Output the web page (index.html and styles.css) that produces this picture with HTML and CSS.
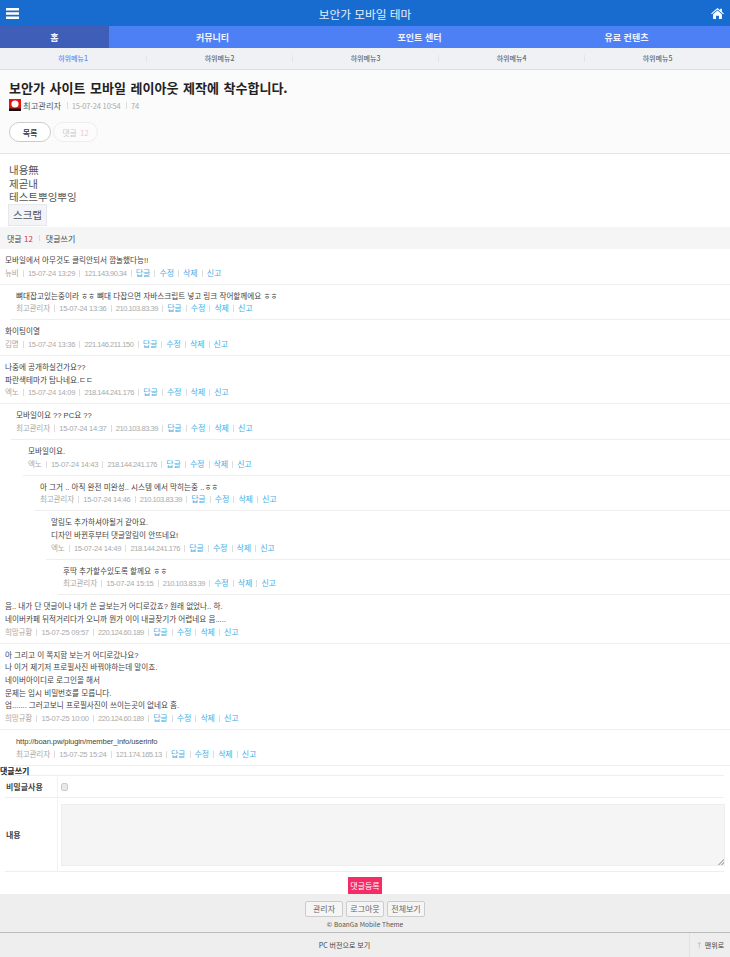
FILE: index.html
```html
<!DOCTYPE html>
<html lang="ko">
<head>
    <meta charset="UTF-8">
    <meta name="viewport" content="width=device-width, initial-scale=1.0">
    <title>보안가 모바일 테마</title>
    <link rel="stylesheet" href="styles.css">
</head>
<body>
    <div class="header">
        <svg class="icon-bars" viewBox="0 0 13 11"><path d="M0 0h13v2.4H0zM0 4.3h13v2.4H0zM0 8.6h13V11H0z"/></svg>
        <h1>보안가 모바일 테마</h1>
        <svg class="icon-home" viewBox="0 0 14 12"><path d="M7 0 0 6l.8.9L7 1.6l6.2 5.3.8-.9-2.2-1.9V.8h-1.9v1.7z"/><path d="M7 2.7 2.2 6.8V12h3.2V8.5h3.2V12h3.2V6.8z"/></svg>
    </div>

    <div class="nav">
        <a class="on">홈</a>
        <a>커뮤니티</a>
        <a>포인트 센터</a>
        <a>유료 컨텐츠</a>
    </div>

    <div class="subnav">
        <a class="on">하위메뉴1</a>
        <a>하위메뉴2</a>
        <a>하위메뉴3</a>
        <a>하위메뉴4</a>
        <a>하위메뉴5</a>
    </div>

    <div class="post-head">
        <h2>보안가 사이트 모바일 레이아웃 제작에 착수합니다.</h2>
        <div class="post-meta">
            <svg class="avatar" viewBox="0 0 12 12"><rect width="12" height="12" fill="#e8120c"/><circle cx="6" cy="5" r="3.6" fill="#fff"/><rect y="9.5" width="12" height="2.5" fill="#111"/></svg>
            <span class="post-author">최고관리자</span>
            <span class="post-sep">15-07-24 10:54</span>
            <span class="post-sep">74</span>
        </div>
        <div class="post-btns">
            <a class="pill">목록</a>
            <a class="pill pill-off">댓글 <em>12</em></a>
        </div>
    </div>

    <div class="post-body">
        <p>내용無</p>
        <p>제곧내</p>
        <p>테스트뿌잉뿌잉</p>
        <a class="scrap">스크랩</a>
    </div>

    <div class="cmt-bar">
        <span>댓글 <em>12</em></span>
        <i></i>
        <span>댓글쓰기</span>
    </div>

    <div class="cmt">
        <p>모바일에서 아무것도 클릭안되서 깜놀했다능!!</p>
        <div class="cmt-meta"><span>뉴비</span><span>15-07-24 13:29</span><span>121.143.90.34</span><a>답글</a><a>수정</a><a>삭제</a><a>신고</a></div>
    </div>
    <div class="cmt lv1">
        <p>뼈대잡고있는중이라 ㅎㅎ 뼈대 다잡으면 자바스크립트 넣고 링크 작어할께에요 ㅎㅎ</p>
        <div class="cmt-meta"><span>최고관리자</span><span>15-07-24 13:36</span><span>210.103.83.39</span><a>답글</a><a>수정</a><a>삭제</a><a>신고</a></div>
    </div>
    <div class="cmt">
        <p>화이팅이열</p>
        <div class="cmt-meta"><span>김명</span><span>15-07-24 13:36</span><span>221.146.211.150</span><a>답글</a><a>수정</a><a>삭제</a><a>신고</a></div>
    </div>
    <div class="cmt">
        <p>나중에 공개하실건가요??</p>
        <p>파란색테마가 탐나네요.ㄷㄷ</p>
        <div class="cmt-meta"><span>엑노</span><span>15-07-24 14:09</span><span>218.144.241.176</span><a>답글</a><a>수정</a><a>삭제</a><a>신고</a></div>
    </div>
    <div class="cmt lv1">
        <p>모바일이요 ?? PC요 ??</p>
        <div class="cmt-meta"><span>최고관리자</span><span>15-07-24 14:37</span><span>210.103.83.39</span><a>답글</a><a>수정</a><a>삭제</a><a>신고</a></div>
    </div>
    <div class="cmt lv2">
        <p>모바일이요.</p>
        <div class="cmt-meta"><span>엑노</span><span>15-07-24 14:43</span><span>218.144.241.176</span><a>답글</a><a>수정</a><a>삭제</a><a>신고</a></div>
    </div>
    <div class="cmt lv3">
        <p>아 그거 .. 아직 완전 미완성.. 시스템 에서 막히는중 ..ㅎㅎ</p>
        <div class="cmt-meta"><span>최고관리자</span><span>15-07-24 14:46</span><span>210.103.83.39</span><a>답글</a><a>수정</a><a>삭제</a><a>신고</a></div>
    </div>
    <div class="cmt lv4">
        <p>알림도 추가하셔야될거 같아요.</p>
        <p>디자인 바뀐후부터 댓글알림이 안뜨네요!</p>
        <div class="cmt-meta"><span>엑노</span><span>15-07-24 14:49</span><span>218.144.241.176</span><a>답글</a><a>수정</a><a>삭제</a><a>신고</a></div>
    </div>
    <div class="cmt lv5">
        <p>후딱 추가할수있도록 할께요 ㅎㅎ</p>
        <div class="cmt-meta"><span>최고관리자</span><span>15-07-24 15:15</span><span>210.103.83.39</span><a>수정</a><a>삭제</a><a>신고</a></div>
    </div>
    <div class="cmt">
        <p>음.. 내가 단 댓글이나 내가 쓴 글보는거 어디로갔죠? 원래 없었나.. 하.</p>
        <p>네이버카페 뒤적거리다가 오니까 뭔가 이이 내글찾기가 어렵네요 음.....</p>
        <div class="cmt-meta"><span>희망규황</span><span>15-07-25 09:57</span><span>220.124.60.189</span><a>답글</a><a>수정</a><a>삭제</a><a>신고</a></div>
    </div>
    <div class="cmt">
        <p>아 그리고 이 쪽지함 보는거 어디로갔나요?</p>
        <p>나 이거 제기저 프로필사진 바꿔야하는데 말이죠.</p>
        <p>네이버아이디로 로그인을 해서</p>
        <p>문제는 임시 비밀번호를 모릅니다.</p>
        <p>엄....... 그러고보니 프로필사진이 쓰이는곳이 없네요 흠.</p>
        <div class="cmt-meta"><span>희망규황</span><span>15-07-25 10:00</span><span>220.124.60.189</span><a>답글</a><a>수정</a><a>삭제</a><a>신고</a></div>
    </div>
    <div class="cmt lv1">
        <p class="cmt-url">http://boan.pw/plugin/member_info/userinfo</p>
        <div class="cmt-meta"><span>최고관리자</span><span>15-07-25 15:24</span><span>121.174.165.13</span><a>답글</a><a>수정</a><a>삭제</a><a>신고</a></div>
    </div>

    <div class="write">
        <h3>댓글쓰기</h3>
        <div class="write-row write-secret">
            <label>비밀글사용</label>
            <div><input type="checkbox"></div>
        </div>
        <div class="write-row write-content">
            <label>내용</label>
            <div><textarea></textarea></div>
        </div>
        <div class="write-submit"><button>댓글등록</button></div>
    </div>

    <div class="footer">
        <div class="footer-btns">
            <a>관리자</a>
            <a>로그아웃</a>
            <a>전체보기</a>
        </div>
        <p>© BoanGa Mobile Theme</p>
    </div>

    <div class="bottom">
        <a class="bottom-pc">PC 버전으로 보기</a>
        <a class="bottom-top"><small>↑</small> 맨위로</a>
    </div>
</body>
</html>
```

FILE: styles.css
```css
* {
    box-sizing: border-box;
}

body {
    margin: 0;
    font-family: "Noto Sans CJK KR", "Noto Sans", sans-serif;
    font-size: 9px;
    color: #333;
    background: #fff;
}

p, h1, h2, h3 {
    margin: 0;
    font-weight: normal;
}

em {
    font-style: normal;
}

.header {
    height: 26px;
    background: #196ccf;
    display: flex;
    align-items: center;
    justify-content: space-between;
    padding: 0 6px;
}
.header h1 {
    font-size: 11.7px;
    color: #e6eefa;
}
.icon-bars {
    width: 13px;
    height: 11px;
    fill: #fff;
}
.icon-home {
    width: 13px;
    height: 11px;
    fill: #fff;
}

.nav {
    height: 22px;
    background: #4e80f5;
    display: grid;
    grid-template-columns: 109px 1fr 1fr 1fr;
}
.nav a {
    display: flex;
    align-items: center;
    justify-content: center;
    color: #eef3ff;
    font-size: 9px;
    font-weight: 700;
}
.nav a.on {
    background: #3f5eb8;
}

.subnav {
    height: 22px;
    background: #eff1f5;
    border-bottom: 1px solid #ddd;
    display: grid;
    grid-template-columns: repeat(5, 1fr);
    align-items: center;
}
.subnav a {
    text-align: center;
    font-size: 7px;
    font-weight: 500;
    color: #666;
    line-height: 7px;
    border-left: 1px solid #e2e4e8;
}
.subnav a:first-child {
    border-left: 0;
}
.subnav a.on {
    color: #5a8af5;
}

.post-head {
    height: 84px;
    background: #fbfbfb;
    border-bottom: 1px solid #e5e5e5;
    padding: 9px 9px 0;
}
.post-head h2 {
    font-size: 13px;
    font-weight: 700;
    line-height: 17px;
    word-spacing: 1px;
    color: #222;
}
.post-meta {
    display: flex;
    align-items: center;
    height: 12px;
    margin-top: 3px;
    font-size: 7.5px;
    letter-spacing: -0.15px;
    color: #aaa;
}
.avatar {
    width: 12px;
    height: 12px;
    margin-right: 2px;
}
.post-author {
    color: #555;
    font-size: 8.3px;
    letter-spacing: 0;
}
.post-sep {
    margin-left: 5.5px;
    padding-left: 4px;
    border-left: 1px solid #ddd;
    line-height: 7px;
}
.post-btns {
    display: flex;
    gap: 2px;
    margin-top: 11px;
}
.pill {
    display: flex;
    align-items: center;
    justify-content: center;
    width: 42px;
    height: 20px;
    border: 1px solid #ccc;
    border-radius: 10px;
    background: #fff;
    font-size: 8px;
    font-weight: 500;
}
.pill-off {
    width: 45px;
    border-color: #eee;
    background: #fcfcfc;
    color: #c8c8c8;
    font-weight: normal;
}
.pill-off em {
    color: #f5c8c8;
    margin-left: 3px;
}

.post-body {
    height: 73px;
    padding: 9px 9px 0;
    font-size: 10.5px;
    line-height: 13.5px;
    color: #555;
}
.scrap {
    display: flex;
    align-items: center;
    justify-content: center;
    width: 39px;
    height: 22px;
    margin-left: -1px;
    background: #f2f4f8;
    border: 1px solid #e6e8ec;
    font-size: 10.5px;
}

.cmt-bar {
    height: 22px;
    background: #f5f5f5;
    display: flex;
    align-items: center;
    padding: 0 7px;
    font-size: 8px;
    color: #444;
}
.cmt-bar em {
    color: #d33;
}
.cmt-bar i {
    width: 1px;
    height: 6px;
    background: #ddd;
    margin: 0 6px;
}

.cmt {
    padding: 6px 0 3.33px 5px;
    border-bottom: 1px solid #eee;
    font-family: "Liberation Sans", "Noto Sans CJK KR", sans-serif;
    font-size: 7.6px;
    line-height: 12.67px;
    color: #444;
}
.lv1 { margin-left: 11px; }
.lv2 { margin-left: 23px; }
.lv3 { margin-left: 35px; }
.lv4 { margin-left: 46px; }
.lv5 { margin-left: 58px; }
.cmt-url {
    letter-spacing: -0.1px;
}
.cmt-meta {
    display: flex;
    height: 12.67px;
    color: #aaa;
    letter-spacing: -0.2px;
}
.cmt-meta span + span, .cmt-meta a {
    margin-left: 4.3px;
}
.cmt-meta span:nth-child(2) {
    letter-spacing: -0.3px;
}
.cmt-meta span:nth-child(3) {
    letter-spacing: -0.5px;
}
.cmt-meta span + span::before, .cmt-meta a::before {
    content: "";
    display: inline-block;
    width: 1px;
    height: 7px;
    margin-right: 4px;
    vertical-align: -1px;
    background: #ddd;
}
.cmt-meta a {
    color: #45aee6;
    font-size: 8px;
}

.write h3 {
    font-size: 8px;
    font-weight: 700;
    line-height: 9px;
    color: #222;
}
.write-row {
    margin: 0 6px 0 5px;
    display: grid;
    grid-template-columns: 53px 1fr;
    border-top: 1px solid #eee;
}
.write-row label {
    display: flex;
    align-items: center;
    padding-left: 1px;
    font-size: 8px;
    font-weight: 700;
    color: #444;
    border-right: 1px solid #f2f2f2;
}
.write-secret {
    height: 22px;
}
.write-secret input {
    appearance: none;
    display: block;
    width: 7px;
    height: 8px;
    margin: 7px 0 0 3px;
    background: #e8e8e8;
    border: 1px solid #ccc;
    border-radius: 2px;
}
.write-content {
    height: 75px;
    border-bottom: 1px solid #eee;
}
.write-content div {
    padding: 6px 0 0 3px;
}
.write-content textarea {
    display: block;
    width: calc(100% + 1px);
    height: 62px;
    background: #f5f5f5;
    border: 1px solid #eee;
}
.write-content textarea::-webkit-resizer {
    background: linear-gradient(135deg, transparent 50%, #bbb 50%, #bbb 60%, transparent 60%, transparent 75%, #bbb 75%, #bbb 85%, transparent 85%) right bottom / 6px 6px no-repeat;
}
.write-submit {
    display: flex;
    justify-content: center;
    padding: 5px 0 0;
}
.write-submit button {
    width: 34px;
    height: 17px;
    border: 0;
    padding: 0;
    background: #f72b66;
    color: #fff;
    font-family: inherit;
    font-size: 8px;
}

.footer {
    height: 39px;
    background: #eee;
    border-bottom: 1px solid #bbb;
    padding-top: 7px;
    text-align: center;
}
.footer-btns {
    display: flex;
    justify-content: center;
    gap: 3px;
}
.footer-btns a {
    width: 38px;
    height: 16px;
    line-height: 14px;
    border: 1px solid #ccc;
    border-radius: 2px;
    background: #f5f5f5;
    font-size: 8px;
    color: #666;
}
.footer p {
    margin-top: 2px;
    font-size: 6.5px;
    color: #555;
    line-height: 10px;
}

.bottom {
    height: 24px;
    background: #eee;
    display: flex;
    align-items: center;
    font-size: 7px;
    color: #444;
}
.bottom-pc {
    flex: 1;
    text-align: center;
}
.bottom-top {
    width: 41px;
    height: 100%;
    border-left: 1px solid #e2e2e2;
    display: flex;
    align-items: center;
    justify-content: center;
    gap: 2px;
}
.bottom-top small {
    color: #aaa;
    font-size: 7px;
}
```
